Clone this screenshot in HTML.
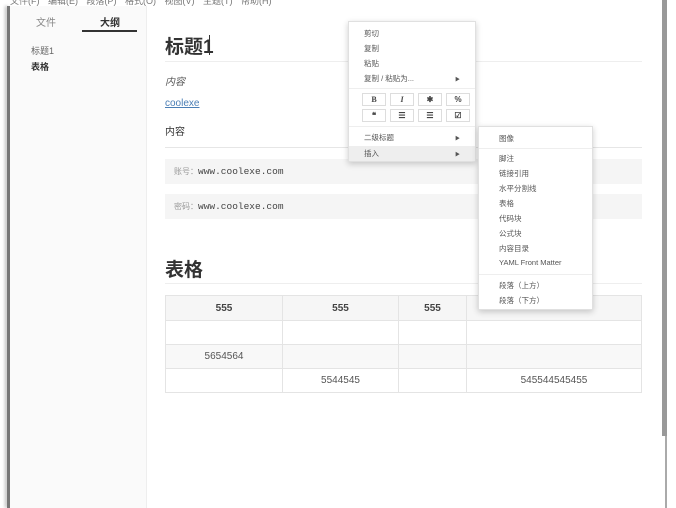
<!DOCTYPE html>
<html><head><meta charset="utf-8"><style>
*{margin:0;padding:0;box-sizing:border-box}
body{width:676px;height:508px;overflow:hidden;background:#fff;position:relative;font-family:"Liberation Sans","Noto Sans CJK SC",sans-serif;color:#333}
.abs{position:absolute}
.menubar{left:10px;top:-6px;font-size:9px;color:#777;white-space:nowrap;word-spacing:6px}
.lborder{left:7px;top:6px;width:3px;height:502px;background:#777;box-shadow:-2px 0 3px #bbb}
.side{left:10px;top:6px;width:137px;height:502px;background:#fafafa;border-right:1px solid #eee}
.t1{left:36px;top:14px;font-size:10px;color:#888}
.t2{left:100px;top:14px;font-size:10px;font-weight:bold;color:#333}
.tl{left:82px;top:30px;width:55px;height:2px;background:#333}
.o1{left:31px;top:44px;font-size:9px;color:#666}
.o2{left:31px;top:60px;font-size:9px;font-weight:bold;color:#333}
.h1{left:165px;top:32px;font-size:19px;font-weight:bold;color:#333}
.cur{left:209px;top:35px;width:1px;height:20px;background:#333}
.p{font-size:10px;color:#333}
.hr{height:1px;background:#eee}
.code{left:165px;width:477px;height:25px;background:#f5f5f5;font-family:"Liberation Mono","Noto Sans CJK SC",monospace;font-size:9.5px;line-height:25px;padding-left:9px;color:#444}
.code span{color:#999;font-family:"Liberation Sans","Noto Sans CJK SC",sans-serif;font-size:8px}
table{position:absolute;left:165px;top:295px;width:477px;border-collapse:collapse;font-size:10px;color:#555}
td{border:1px solid #e4e4e4;height:24px;text-align:center}
tr:nth-child(1) td{font-weight:bold;background:#f6f6f6;height:25px;color:#444}
tr:nth-child(3) td{background:#f8f8f8}
.sb{left:662px;top:0;width:5px;height:436px;background:#999}
.sb2{left:665px;top:436px;width:2px;height:72px;background:#aaa}
.menu{background:#fff;border:1px solid #e0e0e0;box-shadow:0 2px 6px rgba(0,0,0,.2);font-size:7.5px;color:#555}
.mi{position:absolute;left:15px}
.arr{position:absolute;right:15px;font-size:5px}
.btn{position:absolute;width:24px;height:13px;border:1px solid #ddd;text-align:center;font-size:8px;line-height:11px;color:#444;font-weight:bold}
</style></head><body>
<div class="abs menubar">文件(F) 编辑(E) 段落(P) 格式(O) 视图(V) 主题(T) 帮助(H)</div>
<div class="abs lborder"></div>
<div class="abs side"></div>
<div class="abs t1">文件</div><div class="abs t2">大纲</div><div class="abs tl"></div>
<div class="abs o1">标题1</div><div class="abs o2">表格</div>
<div class="abs h1">标题1</div><div class="abs cur"></div>
<div class="abs hr" style="left:165px;top:61px;width:477px"></div>
<div class="abs p" style="left:165px;top:73px;font-style:italic;color:#555">内容</div>
<div class="abs p" style="left:165px;top:98px;color:#4a7eb5;text-decoration:underline">coolexe</div>
<div class="abs p" style="left:165px;top:123px">内容</div>
<div class="abs hr" style="left:165px;top:147px;width:477px;background:#e6e6e6"></div>
<div class="abs code" style="top:159px"><span>账号：</span>www.coolexe.com</div>
<div class="abs code" style="top:194px"><span>密码：</span>www.coolexe.com</div>
<div class="abs h1" style="top:255px">表格</div>
<div class="abs hr" style="left:165px;top:283px;width:477px"></div>
<table>
<tr><td style="width:117px">555</td><td style="width:116px">555</td><td style="width:68px">555</td><td></td></tr>
<tr><td></td><td></td><td></td><td></td></tr>
<tr><td>5654564</td><td></td><td></td><td></td></tr>
<tr><td></td><td>5544545</td><td></td><td>545544545455</td></tr>
</table>
<div class="abs sb"></div><div class="abs sb2"></div>

<div class="abs menu" style="left:348px;top:21px;width:128px;height:141px">
<div class="mi" style="top:6px">剪切</div>
<div class="mi" style="top:21px">复制</div>
<div class="mi" style="top:36px">粘贴</div>
<div class="mi" style="top:51px">复制 / 粘贴为...</div><div class="arr" style="top:54px">▶</div>
<div class="abs hr" style="left:0;top:66px;width:126px"></div>
<div class="btn" style="left:13px;top:71px;font-family:'Liberation Serif',serif">B</div>
<div class="btn" style="left:41px;top:71px;font-family:'Liberation Serif',serif;font-style:italic">I</div>
<div class="btn" style="left:69px;top:71px">✱</div>
<div class="btn" style="left:97px;top:71px">%</div>
<div class="btn" style="left:13px;top:87px">❝</div>
<div class="btn" style="left:41px;top:87px">☰</div>
<div class="btn" style="left:69px;top:87px">☰</div>
<div class="btn" style="left:97px;top:87px">☑</div>
<div class="abs hr" style="left:0;top:104px;width:126px"></div>
<div class="mi" style="top:110px">二级标题</div><div class="arr" style="top:113px">▶</div>
<div class="abs" style="left:0;top:124px;width:126px;height:15px;background:#eee"></div>
<div class="mi" style="top:126px">插入</div><div class="arr" style="top:129px">▶</div>
</div>

<div class="abs menu" style="left:478px;top:126px;width:115px;height:184px">
<div class="mi" style="top:6px;left:20px">图像</div>
<div class="abs hr" style="left:0;top:21px;width:113px"></div>
<div class="mi" style="top:26px;left:20px">脚注</div>
<div class="mi" style="top:41px;left:20px">链接引用</div>
<div class="mi" style="top:56px;left:20px">水平分割线</div>
<div class="mi" style="top:71px;left:20px">表格</div>
<div class="mi" style="top:86px;left:20px">代码块</div>
<div class="mi" style="top:101px;left:20px">公式块</div>
<div class="mi" style="top:116px;left:20px">内容目录</div>
<div class="mi" style="top:131px;left:20px">YAML Front Matter</div>
<div class="abs hr" style="left:0;top:147px;width:113px"></div>
<div class="mi" style="top:153px;left:20px">段落（上方）</div>
<div class="mi" style="top:168px;left:20px">段落（下方）</div>
</div>
</body></html>
